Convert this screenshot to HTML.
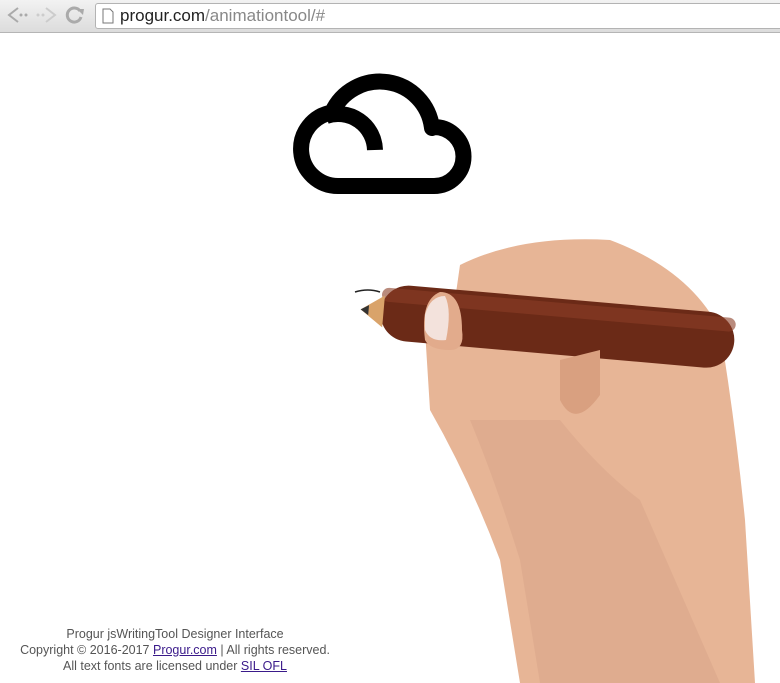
<!DOCTYPE html>
<html><head><style>
body{margin:0;width:780px;height:683px;overflow:hidden;background:#fff;font-family:"Liberation Sans",sans-serif;position:relative}
.bar{position:absolute;left:0;top:0;width:780px;height:32px;background:linear-gradient(#f2f2f2,#dcdcdc);border-bottom:1px solid #b5b5b5}
.url{position:absolute;left:95px;top:3px;width:690px;height:24px;background:#fff;border:1px solid #b3b3b3;border-radius:3px;font-size:17px;line-height:24px;color:#222}
.url span{color:#888}
.foot{position:absolute;left:0;top:626px;width:350px;text-align:center;font-size:12.5px;line-height:16px;color:#555}
.foot a{color:#3a1a8a;text-decoration:underline}
</style></head><body>
<div class="bar">
<svg width="95" height="32" style="position:absolute;left:0;top:0">
<path d="M18 8 L9 15 L18 22" stroke="#aaa" stroke-width="2" fill="none"/><circle cx="21" cy="15" r="1.5" fill="#aaa"/><circle cx="26" cy="15" r="1.5" fill="#aaa"/>
<path d="M46 8 L55 15 L46 22" stroke="#ccc" stroke-width="2" fill="none"/><circle cx="38" cy="15" r="1.5" fill="#ccc"/><circle cx="43" cy="15" r="1.5" fill="#ccc"/>
<path d="M80 11 A7 7 0 1 0 81 17" stroke="#aaa" stroke-width="3" fill="none"/><path d="M77 9 L84 9 L83 15 Z" fill="#aaa"/>
</svg>
<div class="url"><svg width="14" height="16" style="position:absolute;left:5px;top:4px"><path d="M2 1 H9 L12 4 V15 H2 Z" fill="#fff" stroke="#777"/></svg><div style="position:absolute;left:24px;top:0">progur.com<span>/animationtool/#</span></div></div>
</div>
<svg width="780" height="683" style="position:absolute;left:0;top:0">
<g fill="none" stroke="#000" stroke-width="16" stroke-linejoin="round">
<path d="M338,186 A37,37 0 0 1 332,112.5 A52.5,52.5 0 0 1 432,128 L434,127 A29.5,29.5 0 0 1 434,186 Z"/>
<path d="M326,116 A37,37 0 0 1 375,150"/>
</g>
<path d="M355,292 Q368,288 380,292" stroke="#222" stroke-width="1.5" fill="none"/>
<path d="M520,683 L500,560 Q470,480 430,410 L425,330 Q440,300 455,300 L460,265 Q520,235 610,240 Q690,270 720,330 Q735,420 745,520 L755,683 Z" fill="#e7b596"/>
<path d="M540,683 L520,560 Q495,480 470,420 L560,420 Q600,470 640,500 L720,683 Z" fill="#dba68a" opacity="0.6"/>
<g transform="rotate(5 550 325)">
<rect x="380" y="298" width="355" height="56" rx="28" fill="#6b2a17"/>
<rect x="380" y="302" width="355" height="14" rx="7" fill="#8a3e26" opacity="0.6"/>
<path d="M383,310 L360,326 L383,342 Z" fill="#d9a36a"/><path d="M360,326 L368,321 L368,331 Z" fill="#333"/>
</g>
<path d="M425,340 Q420,300 440,292 Q462,292 462,330 Q465,350 450,350 Q430,350 425,340 Z" fill="#e2ab8c"/>
<path d="M425,315 Q430,296 445,296 Q452,310 446,340 Q430,342 425,330 Z" fill="#f3e2dc"/>
<path d="M560,400 Q575,430 600,395 L600,350 L560,360 Z" fill="#d9a080"/>
</svg>
<div class="foot">Progur jsWritingTool Designer Interface<br>Copyright © 2016-2017 <a>Progur.com</a> | All rights reserved.<br>All text fonts are licensed under <a>SIL OFL</a></div>
</body></html>
